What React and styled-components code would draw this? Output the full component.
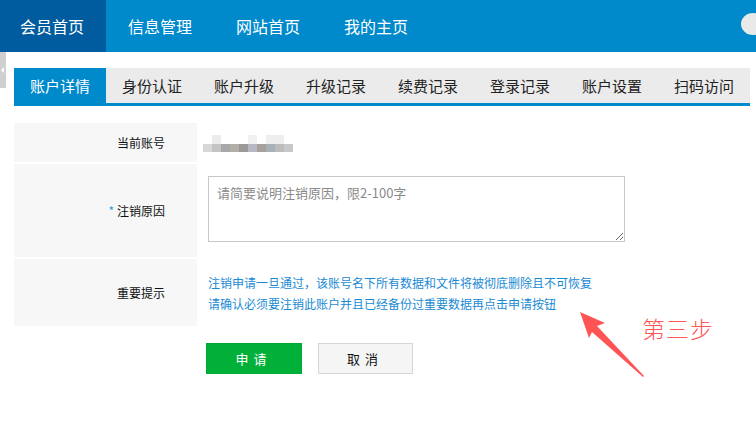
import styled, { createGlobalStyle } from "styled-components";

const GlobalStyle = createGlobalStyle`
  body {
    margin: 0;
    background: #fff;
    font-family: "Noto Sans CJK SC", "Noto Sans", "Liberation Sans", sans-serif;
    color: #222;
  }
`;

const Page = styled.div`
  position: relative;
  width: 756px;
  height: 432px;
  overflow: hidden;
`;

const TopNav = styled.nav`
  display: flex;
  align-items: stretch;
  height: 52px;
  background: #0089cb;
  position: relative;
`;

const NavItem = styled.a`
  display: flex;
  align-items: center;
  padding: 0 22px 0 20px;
  margin-right: 2px;
  font-size: 16px;
  color: #fff;
  background: ${(p) => (p.$active ? "#005c9e" : "transparent")};
`;

const Avatar = styled.span`
  position: absolute;
  right: -9px;
  top: 13px;
  width: 24px;
  height: 22px;
  border-radius: 50%;
  background: #e9e9e9;
`;

const Body = styled.div`
  position: relative;
  padding: 16px 6px 0 14px;
`;

const SideHandle = styled.span`
  position: absolute;
  left: 0;
  top: 0;
  width: 6px;
  height: 36px;
  background: #cfcfcf;
  &::after {
    content: "";
    position: absolute;
    left: 1px;
    top: 15px;
    border-style: solid;
    border-width: 3px 3px 3px 0;
    border-color: transparent #fff transparent transparent;
  }
`;

const TabBar = styled.div`
  display: flex;
  height: 35px;
  background: #ebebeb;
  border-bottom: 3px solid #0089cb;
`;

const Tab = styled.div`
  width: 92px;
  display: flex;
  align-items: center;
  justify-content: center;
  font-size: 15px;
  color: ${(p) => (p.$active ? "#fff" : "#222")};
  background: ${(p) => (p.$active ? "#0089cb" : "transparent")};
`;

const Form = styled.div`
  margin-top: 17px;
  display: grid;
  grid-template-columns: 183px 1fr;
  row-gap: 2px;
`;

const Label = styled.div`
  background: #f7f7f7;
  height: ${(p) => p.$h}px;
  display: flex;
  align-items: center;
  justify-content: flex-end;
  padding-right: 32px;
  font-size: 12px;
  color: #111;
`;

const Star = styled.span`
  color: #2a9fe0;
  margin-right: 3px;
`;

const Value = styled.div`
  display: flex;
  flex-direction: column;
  justify-content: center;
  padding-left: ${(p) => p.$pad ?? 11}px;
`;

const Mosaic = styled.div`
  display: grid;
  grid-template-columns: repeat(10, 9px);
  grid-template-rows: 9px 8px;
  margin-top: 2px;
  filter: blur(0.5px);
`;

const Cell = styled.span`
  background: ${(p) => p.$c};
`;

const ReasonBox = styled.textarea`
  box-sizing: border-box;
  width: 417px;
  height: 66px;
  margin-top: -3px;
  border: 1px solid #c8c8c8;
  padding: 6px 8px;
  font-family: inherit;
  font-size: 13px;
  color: #333;
  resize: both;
  outline: none;
  &::placeholder {
    color: #8a8a8a;
  }
`;

const Notice = styled.p`
  margin: 0;
  font-size: 12px;
  line-height: 21px;
  color: #1a8ad4;
`;

const Actions = styled.div`
  display: flex;
  gap: 16px;
  margin: 17px 0 0 192px;
`;

const Button = styled.button`
  width: ${(p) => (p.$primary ? 96 : 95)}px;
  height: 31px;
  font-family: inherit;
  font-size: 13px;
  letter-spacing: 5px;
  padding-left: 5px;
  color: ${(p) => (p.$primary ? "#fff" : "#111")};
  background: ${(p) => (p.$primary ? "#00b038" : "#f5f5f5")};
  border: 1px solid ${(p) => (p.$primary ? "#00a834" : "#d6d6d6")};
`;

const Callout = styled.div`
  position: absolute;
  left: 578px;
  top: 310px;
  width: 150px;
  height: 70px;
`;

const CalloutText = styled.span`
  position: absolute;
  left: 64px;
  top: 1px;
  font-size: 23px;
  font-weight: 300;
  color: #ff5656;
  letter-spacing: 1px;
`;

const navItems = ["会员首页", "信息管理", "网站首页", "我的主页"];
const tabs = ["账户详情", "身份认证", "账户升级", "升级记录", "续费记录", "登录记录", "账户设置", "扫码访问"];

const mosaicTop = ["#fff", "#ececec", "#fff", "#fff", "#fff", "#f0f0f0", "#fff", "#eeeeee", "#eeeeee", "#fff"];
const mosaicBottom = ["#d8d8d8", "#c4c4c4", "#a8a8a8", "#b4aea8", "#9c9a98", "#b8b8c4", "#a8a09c", "#a8b0b8", "#bcbcbc", "#c8c8c8"];

export default function App() {
  return (
    <Page>
      <GlobalStyle />
      <TopNav>
        {navItems.map((t, i) => (
          <NavItem key={t} $active={i === 0}>
            {t}
          </NavItem>
        ))}
        <Avatar />
      </TopNav>

      <Body>
        <SideHandle />
        <TabBar>
          {tabs.map((t, i) => (
            <Tab key={t} $active={i === 0}>
              {t}
            </Tab>
          ))}
        </TabBar>

        <Form>
          <Label $h={39}>当前账号</Label>
          <Value $pad={6}>
            <Mosaic>
              {mosaicTop.map((c, i) => (
                <Cell key={"t" + i} $c={c} />
              ))}
              {mosaicBottom.map((c, i) => (
                <Cell key={"b" + i} $c={c} />
              ))}
            </Mosaic>
          </Value>

          <Label $h={93}>
            <Star>*</Star>注销原因
          </Label>
          <Value>
            <ReasonBox placeholder="请简要说明注销原因，限2-100字" />
          </Value>

          <Label $h={67}>重要提示</Label>
          <Value>
            <Notice>注销申请一旦通过，该账号名下所有数据和文件将被彻底删除且不可恢复</Notice>
            <Notice>请确认必须要注销此账户并且已经备份过重要数据再点击申请按钮</Notice>
          </Value>
        </Form>

        <Actions>
          <Button $primary>申请</Button>
          <Button>取消</Button>
        </Actions>
      </Body>

      <Callout>
        <svg width="70" height="70" viewBox="0 0 70 70">
          <path d="M2 2 L27 13 L19 16 L66 66 L65 67 L14 22 L11 28 Z" fill="#ff5454" />
        </svg>
        <CalloutText>第三步</CalloutText>
      </Callout>
    </Page>
  );
}
